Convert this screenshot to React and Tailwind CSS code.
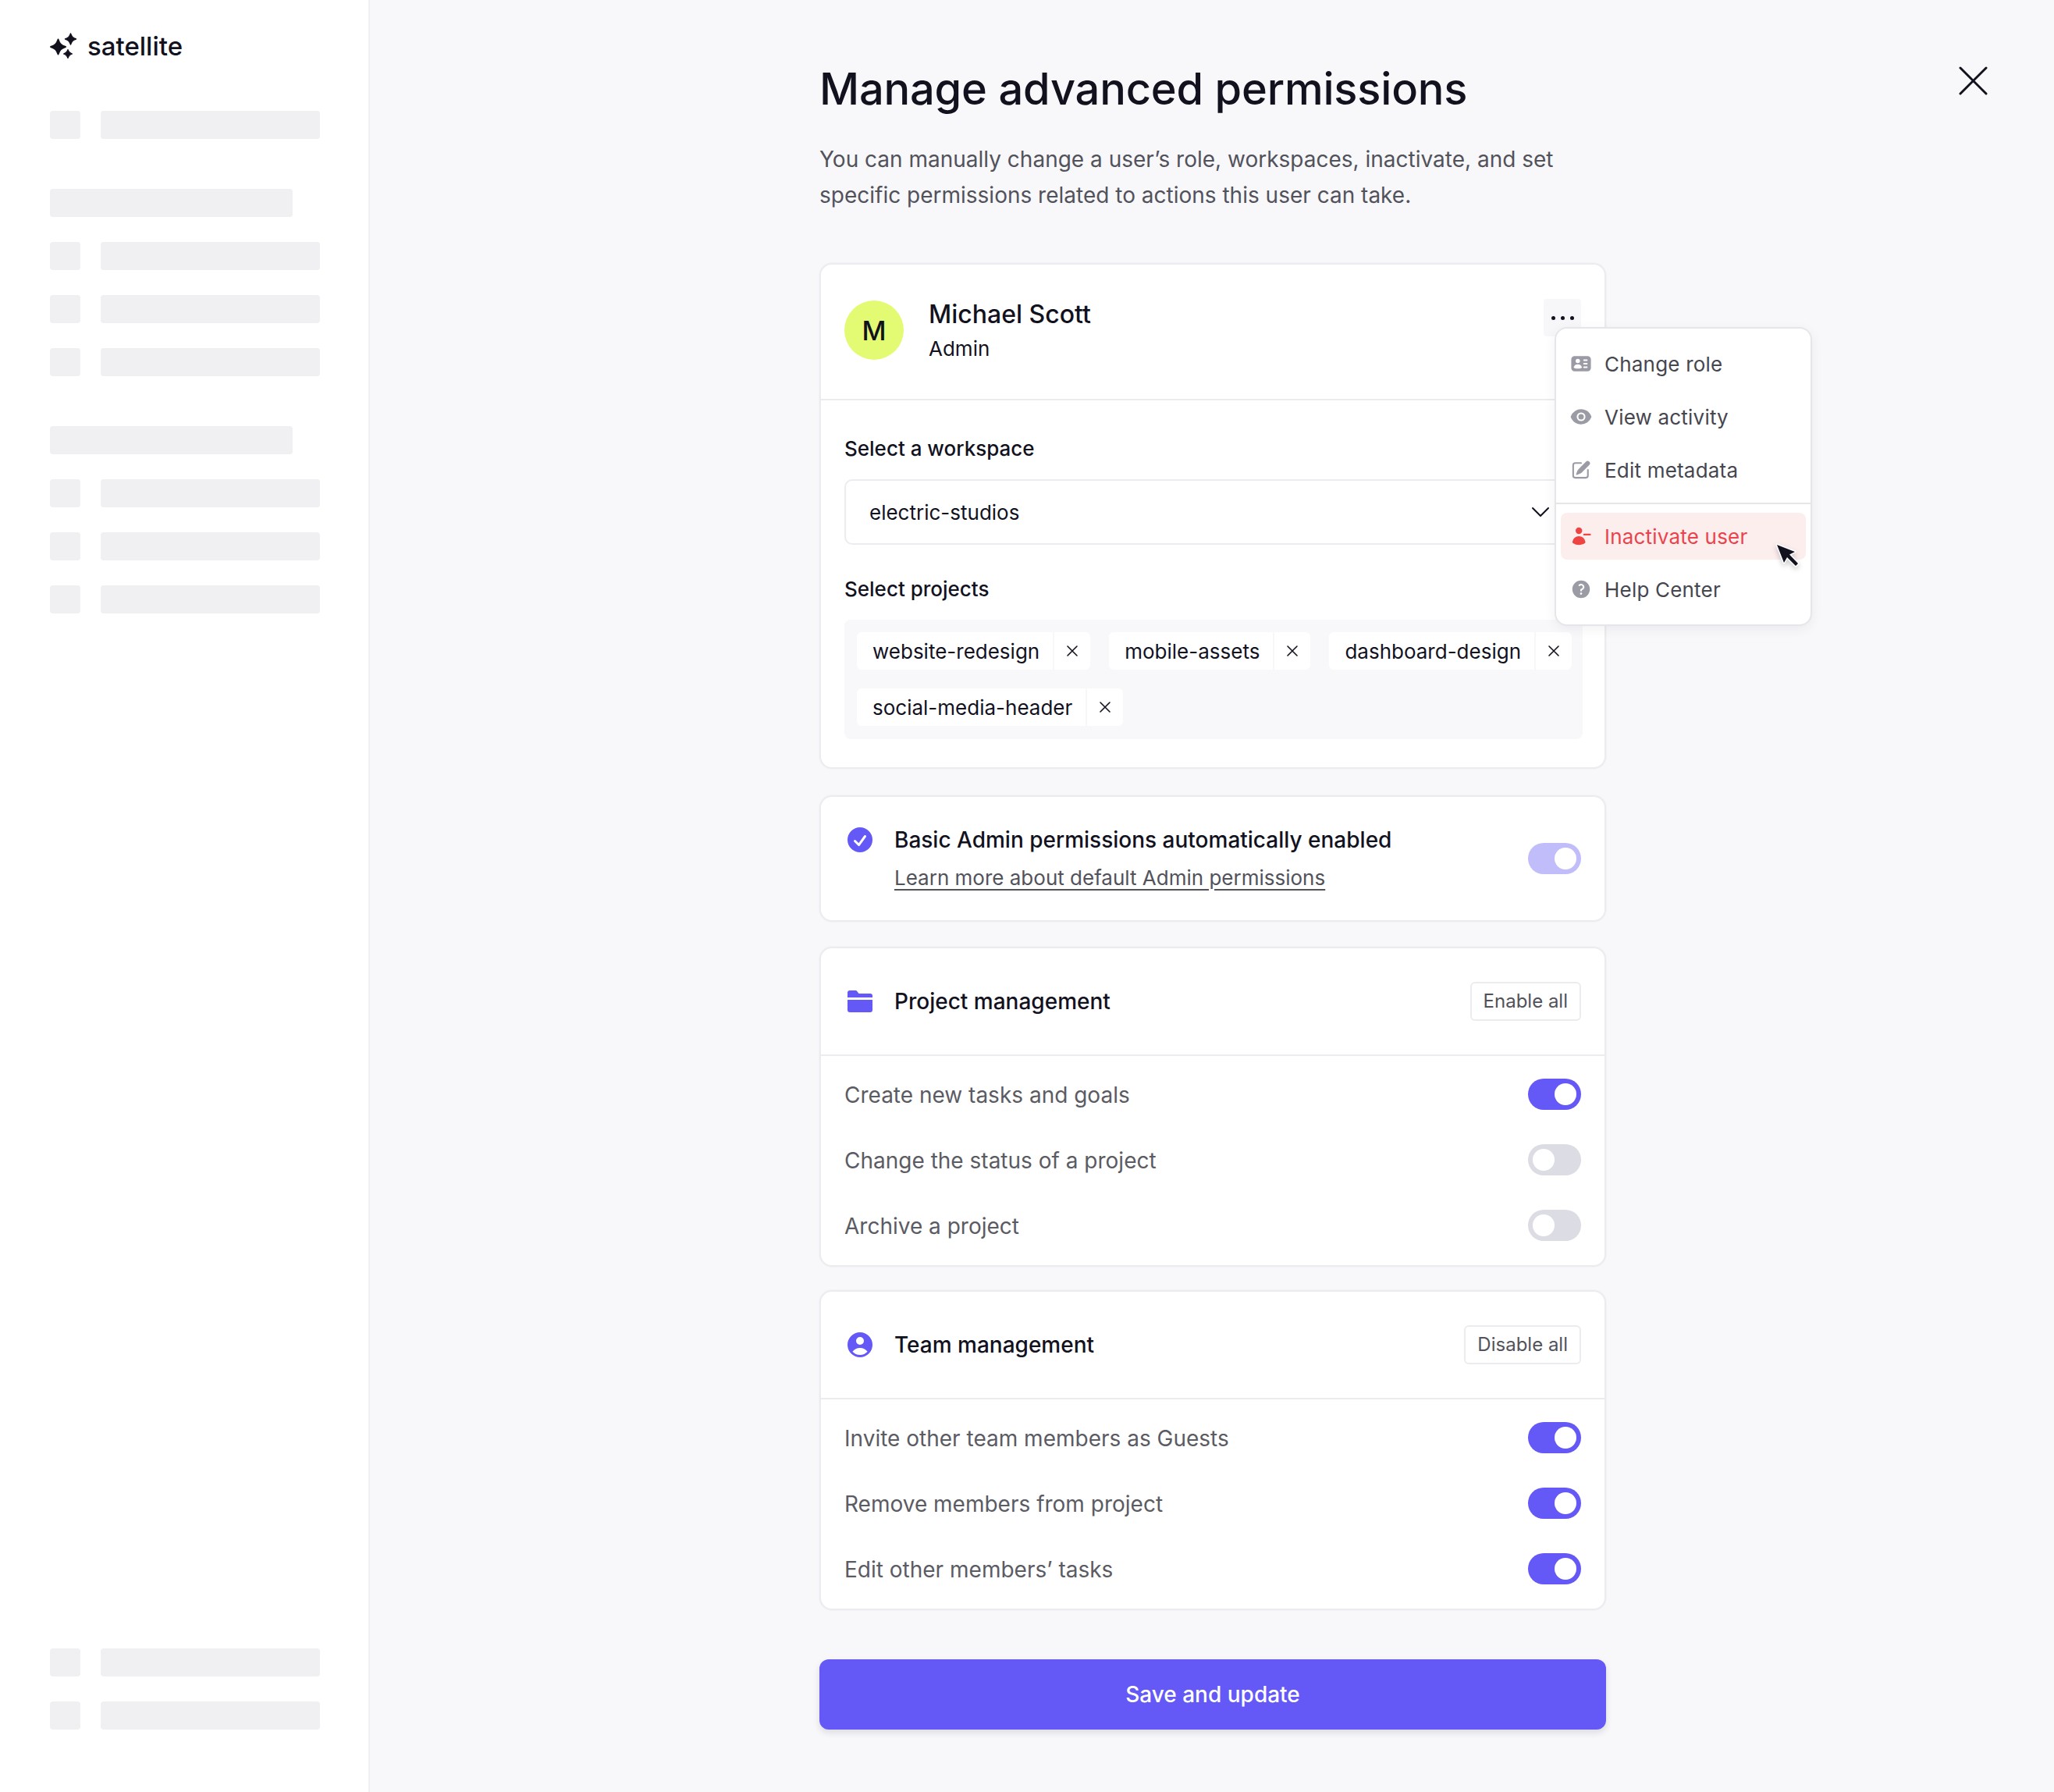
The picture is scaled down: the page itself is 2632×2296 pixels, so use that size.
import React from "react";
import {
  HiMiniIdentification,
  HiMiniEye,
  HiMiniPencilSquare,
  HiMiniUserMinus,
  HiMiniQuestionMarkCircle,
  HiMiniCheckCircle,
  HiMiniUserCircle,
} from "react-icons/hi2";

const Star = ({ cx, cy, r }) => (
  <path
    transform={`translate(${cx} ${cy}) scale(${r})`}
    d="M0 -1C.2 -.4 .4 -.2 1 0C.4 .2 .2 .4 0 1C-.2 .4 -.4 .2 -1 0C-.4 -.2 -.2 -.4 0 -1Z"
    stroke="#12121f"
    strokeWidth={0.2}
    strokeLinejoin="round"
  />
);

const Logo = () => (
  <svg width="34" height="34" viewBox="0 0 34 34" fill="#12121f">
    <Star cx={10.5} cy={18} r={9.5} />
    <Star cx={26.5} cy={8} r={7} />
    <Star cx={23} cy={27} r={5.5} />
  </svg>
);

const Skeleton = ({ className }) => <div className={`h-[36px] rounded-[4px] bg-[#f0f0f2] ${className}`} />;

const SkeletonRow = () => (
  <div className="flex gap-[26px]">
    <Skeleton className="w-[39px]" />
    <Skeleton className="w-[281px]" />
  </div>
);

const Sidebar = () => (
  <aside className="flex w-[474px] shrink-0 flex-col justify-between border-r-2 border-[#f0f0f3] bg-white pb-[80px] pl-[64px]">
    <div>
      <div className="flex h-[142px] items-start gap-[14px] pt-[42px]">
        <Logo />
        <span className="text-[33px] leading-[34px] font-medium text-[#12121f]">satellite</span>
      </div>
      <SkeletonRow />
      <div className="mt-[64px] flex flex-col gap-[32px]">
        <Skeleton className="w-[311px]" />
        <SkeletonRow />
        <SkeletonRow />
        <SkeletonRow />
      </div>
      <div className="mt-[64px] flex flex-col gap-[32px]">
        <Skeleton className="w-[311px]" />
        <SkeletonRow />
        <SkeletonRow />
        <SkeletonRow />
      </div>
    </div>
    <div className="flex flex-col gap-[32px]">
      <SkeletonRow />
      <SkeletonRow />
    </div>
  </aside>
);

const Toggle = ({ state }) => {
  const styles = {
    on: "justify-end bg-[#6459f6]",
    off: "justify-start bg-[#dcdce4]",
    locked: "justify-end bg-[#c1bdfb]",
  };
  return (
    <div className={`flex h-[40px] w-[68px] shrink-0 items-center rounded-full p-[6px] ${styles[state]}`}>
      <div className="h-[28px] w-[28px] rounded-full bg-white" />
    </div>
  );
};

const Chip = ({ label }) => (
  <div className="flex h-[48px] rounded-[6px] bg-white text-[26px] text-[#12121f]">
    <span className="flex items-center pr-[17px] pl-[20px]">{label}</span>
    <span className="flex w-[48px] items-center justify-center border-l-2 border-[#f7f7fa]">
      <svg width="16" height="16" viewBox="0 0 16 16" stroke="#12121f" strokeWidth="1.6" strokeLinecap="round">
        <path d="M2 2l12 12M14 2L2 14" />
      </svg>
    </span>
  </div>
);

const MenuItem = ({ icon: Icon, label, danger }) => (
  <div
    className={`mx-[6px] flex h-[60px] items-center gap-[16px] rounded-[8px] px-[12px] text-[26px] tracking-[0.2px] ${
      danger ? "bg-[#fdeeee] text-[#e9444d]" : "text-[#46464f]"
    }`}
  >
    <Icon size={28} className={danger ? "text-[#ef4444]" : "text-[#9b9ba5]"} />
    <span>{label}</span>
  </div>
);

const Menu = () => (
  <div className="absolute top-[80px] left-[940px] w-[330px] rounded-[16px] border-2 border-[#e6e6ea] bg-white shadow-[0_4px_16px_rgba(18,18,31,0.06)]">
    <div className="flex flex-col gap-[8px] pt-[15px] pb-[12px]">
      <MenuItem icon={HiMiniIdentification} label="Change role" />
      <MenuItem icon={HiMiniEye} label="View activity" />
      <MenuItem icon={HiMiniPencilSquare} label="Edit metadata" />
    </div>
    <div className="h-[2px] bg-[#e6e6ea]" />
    <div className="flex flex-col gap-[8px] pt-[11px] pb-[15px]">
      <MenuItem icon={HiMiniUserMinus} label="Inactivate user" danger />
      <MenuItem icon={HiMiniQuestionMarkCircle} label="Help Center" />
    </div>
    <svg
      className="absolute top-[272px] left-[278px] drop-shadow-[0_3px_3px_rgba(0,0,0,0.2)]"
      width="36"
      height="36"
      viewBox="0 0 36 36"
    >
      <path
        d="M5 5L28 14L21 17.5L32 29L29 32L18 21L14 28Z"
        fill="#12121f"
        stroke="#fff"
        strokeWidth="3"
        strokeLinejoin="round"
        paintOrder="stroke"
      />
    </svg>
  </div>
);

const UserCard = () => (
  <section className="relative rounded-[16px] border-2 border-[#ececf0] bg-white ring-1 ring-[#f3f3f6]">
    <div className="flex h-[174px] items-start justify-between border-b-2 border-[#ececf0] px-[30px] pt-[46px]">
      <div className="flex gap-[32px]">
        <div className="flex h-[76px] w-[76px] items-center justify-center rounded-full bg-[#e3fb73] text-[34px] font-medium text-[#12121f]">
          M
        </div>
        <div className="-mt-[2px]">
          <div className="text-[32px] leading-[40px] font-medium text-[#12121f]">Michael Scott</div>
          <div className="mt-[4px] text-[26px] leading-[40px] text-[#12121f]">Admin</div>
        </div>
      </div>
      <div className="-mt-[2px] flex h-[48px] w-[48px] items-center justify-center gap-[7px] rounded-[4px] bg-[#f7f7f9]">
        <span className="h-[5px] w-[5px] rounded-full bg-[#12121f]" />
        <span className="h-[5px] w-[5px] rounded-full bg-[#12121f]" />
        <span className="h-[5px] w-[5px] rounded-full bg-[#12121f]" />
      </div>
    </div>
    <div className="px-[30px] pt-[42px] pb-[36px]">
      <div className="text-[26px] leading-[40px] font-medium text-[#12121f]">Select a workspace</div>
      <div className="mt-[19px] flex h-[84px] items-center justify-between rounded-[10px] border-2 border-[#ececf0] pr-[38px] pl-[30px] text-[26px] text-[#12121f]">
        <span>electric-studios</span>
        <svg width="24" height="14" viewBox="0 0 24 14" fill="none" stroke="#12121f" strokeWidth="2" strokeLinecap="round" strokeLinejoin="round">
          <path d="M2 2l10 10L22 2" />
        </svg>
      </div>
      <div className="mt-[37px] text-[26px] leading-[40px] font-medium text-[#12121f]">Select projects</div>
      <div className="mt-[19px] -mr-[2px] flex h-[153px] flex-wrap content-start gap-[24px] rounded-[8px] bg-[#f8f8fb] py-[16px] pr-[8px] pl-[16px]">
        <Chip label="website-redesign" />
        <Chip label="mobile-assets" />
        <Chip label="dashboard-design" />
        <Chip label="social-media-header" />
      </div>
    </div>
    <Menu />
  </section>
);

const BasicCard = () => (
  <section className="mt-[34px] flex h-[162px] items-center justify-between rounded-[16px] border-2 border-[#ececf0] bg-white px-[30px] ring-1 ring-[#f3f3f6]">
    <div className="flex gap-[24px]">
      <HiMiniCheckCircle size={40} className="text-[#6459f6]" />
      <div>
        <div className="text-[28px] leading-[40px] font-medium text-[#12121f]">
          Basic Admin permissions automatically enabled
        </div>
        <div className="mt-[9px] text-[26px] leading-[40px] text-[#52525b] underline underline-offset-[5px]">
          Learn more about default Admin permissions
        </div>
      </div>
    </div>
    <Toggle state="locked" />
  </section>
);

const FolderIcon = () => (
  <svg width="40" height="40" viewBox="0 0 40 40" fill="#6459f6">
    <path d="M4 9a3 3 0 0 1 3-3h7.5a2 2 0 0 1 1.7.9L18.5 10H33a3 3 0 0 1 3 3v2H4z" />
    <path d="M4 18h32v13a3 3 0 0 1-3 3H7a3 3 0 0 1-3-3z" />
  </svg>
);

const GroupCard = ({ className, icon, title, action, rows }) => (
  <section className={`rounded-[16px] border-2 border-[#ececf0] bg-white ring-1 ring-[#f3f3f6] ${className}`}>
    <div className="flex h-[138px] items-center justify-between border-b-2 border-[#ececf0] px-[30px]">
      <div className="flex items-center gap-[24px]">
        {icon}
        <span className="text-[28px] font-medium text-[#12121f]">{title}</span>
      </div>
      <div className="flex h-[50px] items-center rounded-[6px] border-2 border-[#ececf0] px-[15px] text-[24px] text-[#52525b]">
        {action}
      </div>
    </div>
    <div className="flex flex-col gap-[44px] px-[30px] pt-[29px] pb-[31px]">
      {rows.map((row) => (
        <div key={row.label} className="flex h-[40px] items-center justify-between">
          <span className="pt-[2px] text-[28px] text-[#5b5b64]">{row.label}</span>
          <Toggle state={row.on ? "on" : "off"} />
        </div>
      ))}
    </div>
  </section>
);

export default function App() {
  return (
    <div className="flex min-h-screen font-['Inter',sans-serif]">
      <Sidebar />
      <main className="relative flex-1 bg-[#f8f8fb] pb-[80px] pl-[576px]">
        <svg className="absolute top-[85px] left-[2036px]" width="37" height="37" viewBox="0 0 37 37" stroke="#12121f" strokeWidth="3" strokeLinecap="round">
          <path d="M2 2l33 33M35 2L2 35" />
        </svg>
        <div className="w-[1008px] pt-[78px]">
          <h1 className="text-[56px] leading-[72px] font-medium tracking-[-0.2px] text-[#12121f]">Manage advanced permissions</h1>
          <p className="mt-[31px] text-[28px] leading-[46px] text-[#52525b]">
            You can manually change a user’s role, workspaces, inactivate, and set specific permissions related to actions this user can take.
          </p>
          <div className="mt-[64px]">
            <UserCard />
            <BasicCard />
            <GroupCard
              className="mt-[32px]"
              icon={<FolderIcon />}
              title="Project management"
              action="Enable all"
              rows={[
                { label: "Create new tasks and goals", on: true },
                { label: "Change the status of a project", on: false },
                { label: "Archive a project", on: false },
              ]}
            />
            <GroupCard
              className="mt-[30px]"
              icon={<HiMiniUserCircle size={40} className="text-[#6459f6]" />}
              title="Team management"
              action="Disable all"
              rows={[
                { label: "Invite other team members as Guests", on: true },
                { label: "Remove members from project", on: true },
                { label: "Edit other members’ tasks", on: true },
              ]}
            />
            <button className="mt-[63px] h-[90px] w-full rounded-[12px] bg-[#6459f6] text-[28px] font-medium text-white shadow-[0_4px_8px_rgba(18,18,31,0.12)]">
              Save and update
            </button>
          </div>
        </div>
      </main>
    </div>
  );
}
